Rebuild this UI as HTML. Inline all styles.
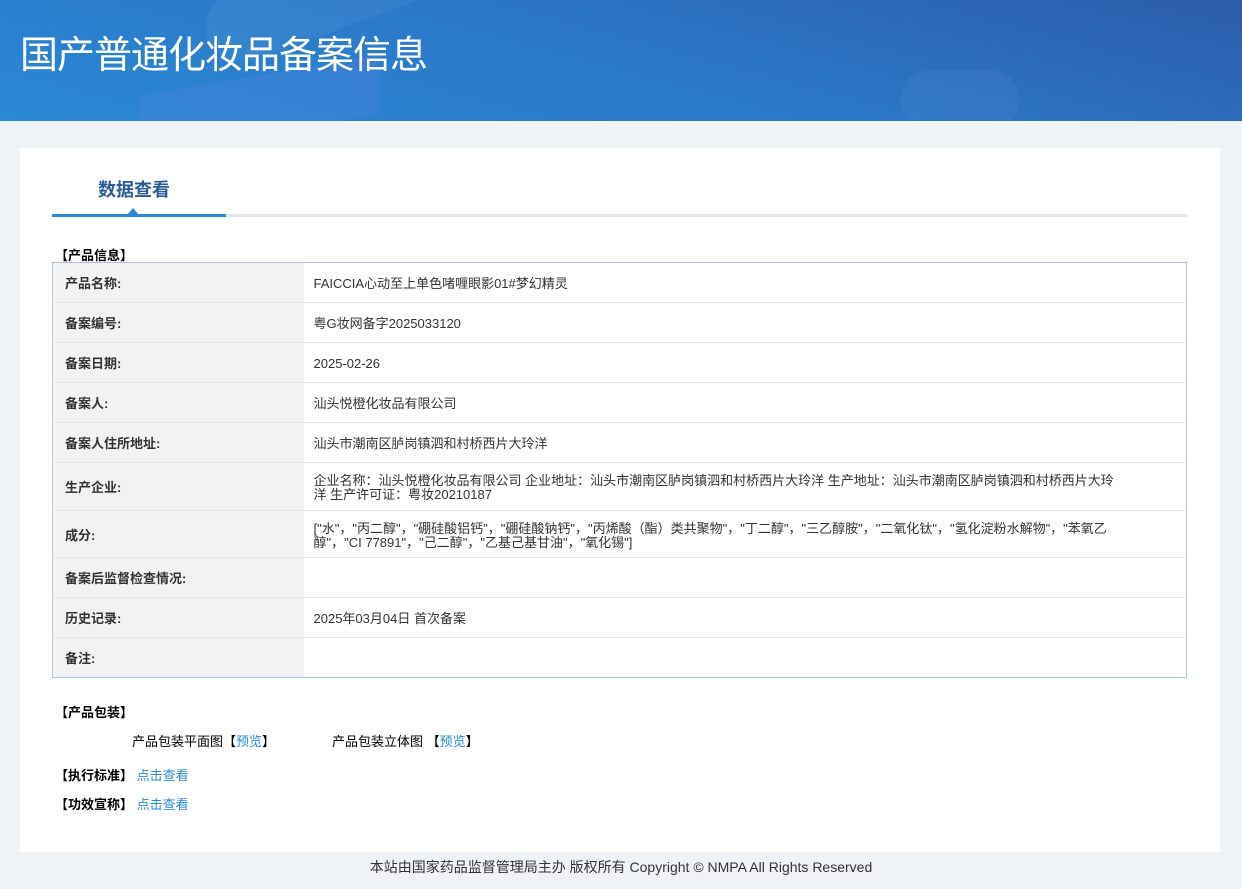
<!DOCTYPE html>
<html><head><meta charset="utf-8"><style>
*{margin:0;padding:0;box-sizing:border-box}
body{width:1242px;height:889px;background:#eff3f6;font-family:"Liberation Sans","Noto Sans CJK SC",sans-serif;font-size:13px;color:#333;position:relative;overflow:hidden}
.hd{position:absolute;left:0;top:0;width:1242px;height:121px;background:linear-gradient(15deg,#2a88d4 0%,#2b78c8 50%,#2c5dab 100%);overflow:hidden}
.hd h1{position:absolute;left:20px;top:24px;font-size:38px;font-weight:normal;color:#fff;letter-spacing:-1px}
.card{position:absolute;left:20px;top:148px;width:1200px;height:704px;background:#fff}
.tab{position:absolute;left:78px;top:28px;font-size:18px;font-weight:bold;color:#2a5d98}
.ln{position:absolute;left:32px;top:66px;width:1135px;height:3px;background:#e4e6e9}
.ln b{position:absolute;left:0;top:0;width:174px;height:3px;background:#2b8ad8}
.tri{position:absolute;left:107px;top:60px;width:0;height:0;border-left:6px solid transparent;border-right:6px solid transparent;border-bottom:7px solid #2b8ad8}
.sec{position:absolute;left:35px;font-weight:bold;color:#000;font-size:13px}
table{position:absolute;left:32px;top:114px;width:1135px;border-collapse:collapse;border:1px solid #a9c6ea}
td{border-top:1px solid #e6e6e6;font-size:13px;line-height:14px;vertical-align:middle;padding-top:3px}
td.l{width:251px;background:#f2f2f2;font-weight:bold;padding-left:12px;color:#333}
td.v{padding:3px 60px 0 10px;color:#333}
a{color:#2b8ad8;text-decoration:none}
.ft{position:absolute;top:857px;left:0;width:1242px;text-align:center;font-size:14px;color:#333}
</style></head><body>
<div class="hd">
<div style="position:absolute;left:140px;top:75px;width:240px;height:60px;background:rgba(90,130,230,.25);transform:skewY(-10deg)"></div>
<div style="position:absolute;left:200px;top:-40px;width:260px;height:70px;border-radius:40px;background:rgba(255,255,255,.05);transform:rotate(-20deg)"></div>
<div style="position:absolute;left:900px;top:70px;width:120px;height:60px;border-radius:40px;background:rgba(255,255,255,.04)"></div>
<h1>国产普通化妆品备案信息</h1></div>
<div class="card">
<div class="tab">数据查看</div>
<div class="ln"><b></b></div><div class="tri"></div>
<div class="sec" style="top:97px">【产品信息】</div>
<table>
<tr style="height:40px"><td class="l" style="border-top:0">产品名称:</td><td class="v" style="border-top:0">FAICCIA心动至上单色啫喱眼影01#梦幻精灵</td></tr>
<tr style="height:40px"><td class="l">备案编号:</td><td class="v">粤G妆网备字2025033120</td></tr>
<tr style="height:40px"><td class="l">备案日期:</td><td class="v">2025-02-26</td></tr>
<tr style="height:40px"><td class="l">备案人:</td><td class="v">汕头悦橙化妆品有限公司</td></tr>
<tr style="height:40px"><td class="l">备案人住所地址:</td><td class="v">汕头市潮南区胪岗镇泗和村桥西片大玲洋</td></tr>
<tr style="height:48px"><td class="l">生产企业:</td><td class="v">企业名称：汕头悦橙化妆品有限公司 企业地址：汕头市潮南区胪岗镇泗和村桥西片大玲洋 生产地址：汕头市潮南区胪岗镇泗和村桥西片大玲洋 生产许可证：粤妆20210187</td></tr>
<tr style="height:47px"><td class="l">成分:</td><td class="v">["水"，"丙二醇"，"硼硅酸铝钙"，"硼硅酸钠钙"，"丙烯酸（酯）类共聚物"，"丁二醇"，"三乙醇胺"，"二氧化钛"，"氢化淀粉水解物"，"苯氧乙醇"，"CI 77891"，"己二醇"，"乙基己基甘油"，"氧化锡"]</td></tr>
<tr style="height:40px"><td class="l">备案后监督检查情况:</td><td class="v"></td></tr>
<tr style="height:40px"><td class="l">历史记录:</td><td class="v">2025年03月04日 首次备案</td></tr>
<tr style="height:40px"><td class="l">备注:</td><td class="v"></td></tr>
</table>
<div class="sec" style="top:554px">【产品包装】</div>
<div style="position:absolute;left:112px;top:583px;color:#000">产品包装平面图【<a>预览</a>】</div>
<div style="position:absolute;left:312px;top:583px;color:#000">产品包装立体图 【<a>预览</a>】</div>
<div class="sec" style="top:617px">【执行标准】 <a style="font-weight:normal">点击查看</a></div>
<div class="sec" style="top:646px">【功效宣称】 <a style="font-weight:normal">点击查看</a></div>
</div>
<div class="ft">本站由国家药品监督管理局主办 版权所有 Copyright © NMPA All Rights Reserved</div>
</body></html>
